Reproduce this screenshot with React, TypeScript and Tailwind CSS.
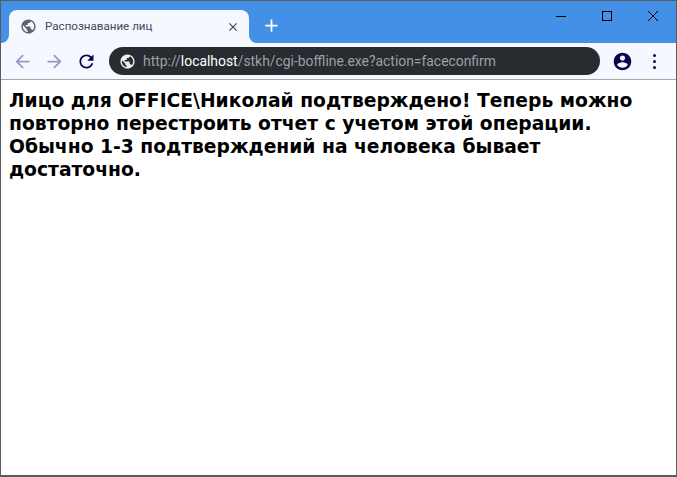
import React from 'react';

// Material paths, same drawings the browser chrome uses
const icons = {
  globe: 'M12 2C6.48 2 2 6.48 2 12s4.48 10 10 10 10-4.48 10-10S17.52 2 12 2zm-1 17.93c-3.95-.49-7-3.85-7-7.93 0-.62.08-1.21.21-1.79L9 15v1c0 1.1.9 2 2 2v1.93zm6.9-2.54c-.26-.81-1-1.39-1.9-1.39h-1v-3c0-.55-.45-1-1-1H8v-2h2c.55 0 1-.45 1-1V7h2c1.1 0 2-.9 2-2v-.41c2.93 1.19 5 4.06 5 7.41 0 2.08-.8 3.97-2.1 5.39z',
  account: 'M12 2C6.48 2 2 6.48 2 12s4.48 10 10 10 10-4.48 10-10S17.52 2 12 2zm0 3c1.66 0 3 1.34 3 3s-1.34 3-3 3-3-1.34-3-3 1.34-3 3-3zm0 14.2c-2.5 0-4.71-1.28-6-3.22.03-1.99 4-3.08 6-3.08 1.99 0 5.97 1.09 6 3.08-1.29 1.94-3.5 3.22-6 3.22z',
  refresh: 'M17.65 6.35C16.2 4.9 14.21 4 12 4c-4.42 0-7.99 3.58-7.99 8s3.57 8 7.99 8c3.73 0 6.84-2.55 7.73-6h-2.08c-.82 2.33-3.04 4-5.65 4-3.31 0-6-2.69-6-6s2.69-6 6-6c1.66 0 3.14.69 4.22 1.78L13 11h7V4l-2.35 2.35z',
  back: 'M20 11H7.83l5.59-5.59L12 4l-8 8 8 8 1.41-1.41L7.83 13H20v-2z',
  forward: 'M12 4l-1.41 1.41L16.17 11H4v2h12.17l-5.58 5.59L12 20l8-8z',
  close: 'M19 6.41L17.59 5 12 10.59 6.41 5 5 6.41 10.59 12 5 17.59 6.41 19 12 13.41 17.59 19 19 17.59 13.41 12z',
  add: 'M19 13h-6v6h-2v-6H5v-2h6V5h2v6h6v2z',
};

const Icon = ({ name, size, color }: { name: keyof typeof icons; size: number; color: string }) => (
  <svg width={size} height={size} viewBox="0 0 24 24" fill={color} className="shrink-0">
    <path d={icons[name]} />
  </svg>
);

const WindowButton = ({ children }: { children: React.ReactNode }) => (
  <div className="flex w-[46px] justify-center">
    <svg width="10" height="10" viewBox="0 0 10 10" fill="none" stroke="#000" strokeWidth="1">
      {children}
    </svg>
  </div>
);

export default function App() {
  return (
    <div className="flex h-[477px] w-[677px] flex-col overflow-hidden border border-b-2 border-[#5c5c5c] bg-white">
      {/* Title bar with the tab */}
      <div className="flex h-[42px] shrink-0 items-end bg-[#4490e6] pl-2">
        <div className="relative flex h-[33px] w-[240px] items-center rounded-t-lg bg-[#f5f8ff] pl-[11px] pr-[9px]">
          {/* flared tab feet */}
          <div className="absolute bottom-0 left-[-8px] size-2 bg-[#f5f8ff]">
            <div className="size-2 rounded-br-lg bg-[#4490e6]" />
          </div>
          <div className="absolute bottom-0 right-[-8px] size-2 bg-[#f5f8ff]">
            <div className="size-2 rounded-bl-lg bg-[#4490e6]" />
          </div>
          <Icon name="globe" size={17} color="#5f6368" />
          <span className="ml-[8px] flex-1 font-['Roboto',sans-serif] text-[11.6px] text-[#3c4a60]">Распознавание лиц</span>
          <Icon name="close" size={14} color="#2f4a68" />
        </div>
        <div className="mb-[7px] ml-[12px]">
          <Icon name="add" size={21} color="#ffffff" />
        </div>
        <div className="mb-[22px] ml-auto flex items-center">
          <WindowButton><path d="M0 5.5H10" /></WindowButton>
          <WindowButton><rect x="0.5" y="0.5" width="9" height="9" /></WindowButton>
          <WindowButton><path d="M0 0L10 10M10 0L0 10" /></WindowButton>
        </div>
      </div>

      {/* Toolbar */}
      <div className="flex h-[37px] shrink-0 items-center border-b border-[#a6a6a6] bg-[#f5f8ff] pl-[11px]">
        <Icon name="back" size={21} color="#9b95c2" />
        <div className="ml-[11px]"><Icon name="forward" size={21} color="#9b95c2" /></div>
        <div className="ml-[11px]"><Icon name="refresh" size={21} color="#0f0050" /></div>
        <div className="ml-[12px] flex h-[28px] w-[491px] items-center rounded-full bg-[#282c30] pl-[10px] font-['Roboto',sans-serif] text-[13.9px] text-[#9aa0a6]">
          <Icon name="globe" size={17} color="#f0f0f0" />
          <span className="ml-[7px]">http://<span className="text-white">localhost</span>/stkh/cgi-boffline.exe?action=faceconfirm</span>
        </div>
        <div className="ml-[12px]"><Icon name="account" size={21} color="#0f0050" /></div>
        <div className="ml-[20px] flex flex-col gap-[3px]">
          <div className="size-[3px] rounded-full bg-[#0f0050]" />
          <div className="size-[3px] rounded-full bg-[#0f0050]" />
          <div className="size-[3px] rounded-full bg-[#0f0050]" />
        </div>
      </div>

      {/* Page body */}
      <div className="px-2 pt-[9px] font-['DejaVu_Sans',sans-serif] text-[18.72px] leading-[23px] font-bold text-black">
        Лицо для OFFICE\Николай подтверждено! Теперь можно повторно перестроить отчет с учетом этой операции. Обычно 1-3 подтверждений на человека бывает достаточно.
      </div>
    </div>
  );
}
